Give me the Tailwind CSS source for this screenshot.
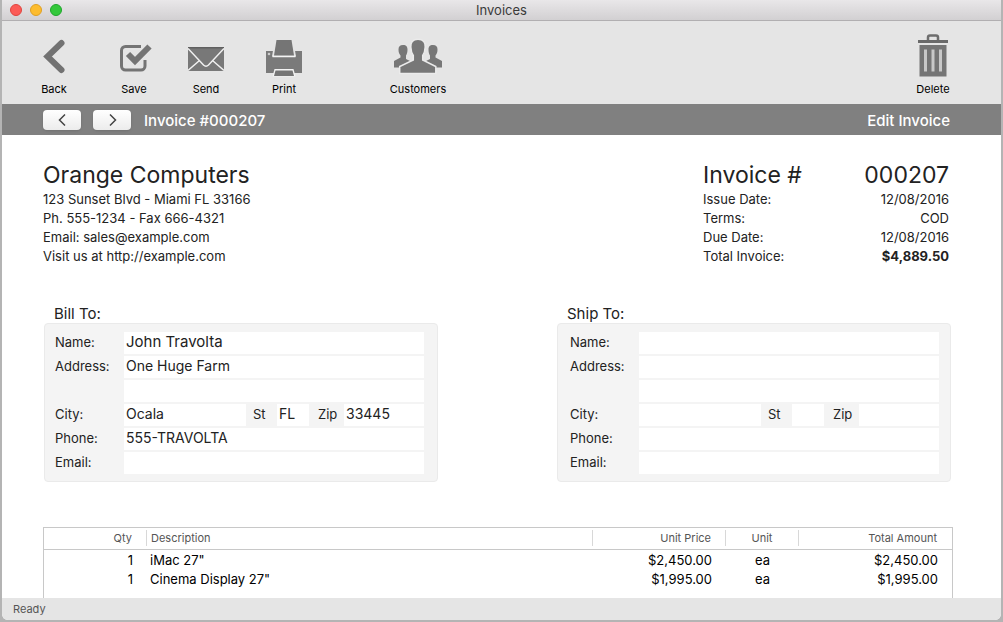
<!DOCTYPE html>
<html lang="en">
<head>
<meta charset="utf-8">
<title>Invoices</title>
<script src="https://cdn.jsdelivr.net/npm/@tailwindcss/browser@4"></script>
</head>
<body class="bg-[#b4b4b4] font-['Inter',sans-serif] text-[13px] text-[#222222]">
<div class="flex h-screen flex-col px-0.5 pb-0.5">
<div class="flex min-h-0 flex-1 flex-col overflow-hidden rounded-b-md bg-white">

  <header class="grid h-[21px] shrink-0 grid-cols-3 items-center border-b border-[#b1afb1] bg-linear-to-b from-[#e9e7e9] to-[#d2d0d2] px-2">
    <div class="flex gap-2">
      <button aria-label="Close" class="size-3 rounded-full border border-[#e0443e] bg-[#fc5b57]"></button>
      <button aria-label="Minimize" class="size-3 rounded-full border border-[#dfa023] bg-[#fdbc2e]"></button>
      <button aria-label="Zoom" class="size-3 rounded-full border border-[#1fa62c] bg-[#34c83b]"></button>
    </div>
    <h1 class="text-center text-[13px] leading-5 text-[#3a3a3a]">Invoices</h1>
  </header>

  <nav class="flex h-[83px] shrink-0 items-start bg-[#e5e5e5] pt-[13px] pr-9 pl-3 text-[11px] leading-4 text-black">
    <button class="flex w-20 flex-col items-center gap-[3px]">
      <svg class="h-11 w-6" viewBox="0 0 24 44" fill="none" stroke="#727272" stroke-width="6"><path d="M19.500 9 5.500 22.500 19.500 36" stroke-linecap="round"/></svg>
      Back
    </button>
    <button class="flex w-20 flex-col items-center gap-[3px]">
      <svg class="h-11 w-9" viewBox="0 0 36 44" fill="none" stroke="#747474"><path d="M25 12.500H9.500a4 4 0 0 0-4 4V32a4 4 0 0 0 4 4h15.500a4 4 0 0 0 4-4v-6" stroke-width="3"/><path d="M12 20.500 19 27.500 32.500 13" stroke="#e5e5e5" stroke-width="9"/><path d="M12 20 19 27 33.500 12.500" stroke-width="6"/></svg>
      Save
    </button>
    <button class="flex w-16 flex-col items-center gap-[3px]">
      <svg class="h-11 w-9" viewBox="0 0 36 44"><rect y="13" width="36" height="24" fill="#787878"/><path d="M0 13h36v1.500H0z" fill="#606060"/><path d="M0 14.500 15.500 31q2.500 2.500 5 0L36 14.500M0 36.500 11.500 26.500M36 36.500 24.500 26.500" fill="none" stroke="#f0f0f0" stroke-width="1.500"/></svg>
      Send
    </button>
    <button class="flex w-[92px] flex-col items-center gap-[3px]">
      <svg class="h-11 w-9" viewBox="0 0 36 44"><path d="M0 17h36v22H0z" fill="#7a7a7a"/><path d="M9 5h18l3 17.500H6z" fill="#e5e5e5"/><path d="M6.500 22.500h23" stroke="#f4f4f4" stroke-width="1.500"/><path d="M10.500 6h15l2.500 15.500H8z" fill="#757575"/><path d="M8.500 35h19l2 7.500h-23z" fill="#f4f4f4"/><path d="M9.500 36.500h17l1.500 5.500H8z" fill="#757575"/><circle cx="3" cy="20" r="1.300" fill="#ccc"/></svg>
      Print
    </button>
    <button class="ml-11 flex w-[88px] flex-col items-center gap-[3px]">
      <svg class="h-11 w-12" viewBox="0 0 48 44" fill="#777"><path id="person" d="M9 11c3.500 0 4.500 2 4.500 4.500 0 2.600-.4 4.400-1.500 6V25l6 3v5.500H0V27l6.500-3.500v-2c-1.300-1.500-2-3.200-2-6 0-3 1.300-4.500 4.500-4.500z"/><use href="#person" transform="matrix(-1 0 0 1 48 0)"/><path d="M24 5.300c5.400 0 7.500 3 7.200 7.700-.2 4-1 6.500-2.500 8.500v4.500l13.100 6.500V39.500H5.700v-7L19.300 26v-4.500c-1.500-2-2.300-4.500-2.500-8.500-.3-4.700 1.800-7.700 7.200-7.700z" stroke="#ebebeb" stroke-width="1.500"/></svg>
      Customers
    </button>
    <button class="ml-auto flex w-16 flex-col items-center gap-[3px]">
      <svg class="h-11 w-8" viewBox="0 0 32 44"><path d="M11 6V3.500Q11 1.500 13 1.500h6Q21 1.500 21 3.500V6" fill="none" stroke="#6e6e6e" stroke-width="2.500"/><path d="M1 6h30v3H1z" fill="#6a6a6a"/><path d="M2.500 11h27v31.500h-27z" fill="#757575"/><path d="M8.500 15.500v22M16 15.500v22M23.500 15.500v22" stroke="#c8c8c8" stroke-width="3"/></svg>
      Delete
    </button>
  </nav>

  <div class="flex h-[31px] shrink-0 items-center bg-[#808080] pr-[51px] pl-[41px] text-[15px] text-white">
    <button aria-label="Previous invoice" class="flex h-5 w-[38px] items-center justify-center rounded bg-linear-to-b from-white to-[#ececec] shadow-sm"><svg class="h-3 w-2" viewBox="0 0 8 12" fill="none" stroke="#444" stroke-width="1.500"><path d="M7 .5 1.500 6 7 11.500"/></svg></button>
    <button aria-label="Next invoice" class="ml-3 flex h-5 w-[38px] items-center justify-center rounded bg-linear-to-b from-white to-[#ececec] pl-0.5 shadow-sm"><svg class="h-3 w-2" viewBox="0 0 8 12" fill="none" stroke="#444" stroke-width="1.500"><path d="M1 .5 6.500 6 1 11.500"/></svg></button>
    <h2 class="ml-[13px] pt-[3px] font-medium">Invoice #000207</h2>
    <a href="#edit" class="ml-auto pt-[3px] font-medium">Edit Invoice</a>
  </div>

  <main class="flex min-h-0 flex-1 flex-col overflow-hidden pt-[22px] pr-12 pl-[41px]">
    <div class="flex justify-between pr-1 leading-[19px]">
      <address class="not-italic">
        <h3 class="pt-1 text-[23px] leading-[29px]">Orange Computers</h3>
        <p>123 Sunset Blvd - Miami FL 33166</p>
        <p>Ph. 555-1234 - Fax 666-4321</p>
        <p>Email: sales@example.com</p>
        <p>Visit us at http://example.com</p>
      </address>
      <dl class="grid w-[246px] grid-cols-[auto_auto] content-start justify-between">
        <dt class="pt-1 text-[23px] leading-[29px]">Invoice #</dt><dd class="pt-1 text-right text-[23px] leading-[29px]">000207</dd>
        <dt>Issue Date:</dt><dd class="text-right">12/08/2016</dd>
        <dt>Terms:</dt><dd class="text-right">COD</dd>
        <dt>Due Date:</dt><dd class="text-right">12/08/2016</dd>
        <dt>Total Invoice:</dt><dd class="text-right font-bold">$4,889.50</dd>
      </dl>
    </div>

    <form class="mt-[35px] grid shrink-0 grid-cols-2 gap-[119px] pr-0.5 pl-px">
      <fieldset class="min-w-0">
        <legend class="px-2.5 pt-1 text-[15px] leading-[18px]">Bill To:</legend>
        <div class="flex flex-col gap-0.5 rounded border border-[#eaeaea] bg-[#f4f4f4] pt-2 pr-[13px] pb-[7px] pl-2.5 text-[13px]">
          <div class="flex h-[22px] items-center"><label for="b-name" class="w-[69px]">Name:</label><input id="b-name" class="h-full min-w-0 flex-1 bg-white px-0.5 pb-1 text-[15px] outline-none" value="John Travolta"></div>
          <div class="flex h-[22px] items-center"><label for="b-addr" class="w-[69px]">Address:</label><input id="b-addr" class="h-full min-w-0 flex-1 bg-white px-0.5 pb-1 text-sm outline-none" value="One Huge Farm"></div>
          <div class="flex h-[22px] items-center pl-[69px]"><input aria-label="Address line 2" class="h-full min-w-0 flex-1 bg-white px-0.5 pb-1 text-sm outline-none"></div>
          <div class="flex h-[22px] items-center"><label for="b-city" class="w-[69px]">City:</label><input id="b-city" class="h-full min-w-0 flex-1 bg-white px-0.5 pb-1 text-sm outline-none" value="Ocala"><label for="b-st" class="w-[31px] pl-[7px]">St</label><input id="b-st" class="h-full w-8 bg-white px-0.5 pb-1 text-sm outline-none" value="FL"><label for="b-zip" class="w-[35px] pl-[9px]">Zip</label><input id="b-zip" class="h-full w-20 bg-white px-0.5 pb-1 text-sm outline-none" value="33445"></div>
          <div class="flex h-[22px] items-center"><label for="b-phone" class="w-[69px]">Phone:</label><input id="b-phone" class="h-full min-w-0 flex-1 bg-white px-0.5 pb-1 text-sm outline-none" value="555-TRAVOLTA"></div>
          <div class="flex h-[22px] items-center"><label for="b-email" class="w-[69px]">Email:</label><input id="b-email" class="h-full min-w-0 flex-1 bg-white px-0.5 pb-1 text-sm outline-none"></div>
        </div>
      </fieldset>
      <fieldset class="min-w-0">
        <legend class="px-2.5 pt-1 text-[15px] leading-[18px]">Ship To:</legend>
        <div class="flex flex-col gap-0.5 rounded border border-[#eaeaea] bg-[#f4f4f4] pt-2 pr-[11px] pb-[7px] pl-3 text-[13px]">
          <div class="flex h-[22px] items-center"><label for="s-name" class="w-[69px]">Name:</label><input id="s-name" class="h-full min-w-0 flex-1 bg-white px-0.5 pb-1 text-[15px] outline-none"></div>
          <div class="flex h-[22px] items-center"><label for="s-addr" class="w-[69px]">Address:</label><input id="s-addr" class="h-full min-w-0 flex-1 bg-white px-0.5 pb-1 text-sm outline-none"></div>
          <div class="flex h-[22px] items-center pl-[69px]"><input aria-label="Address line 2" class="h-full min-w-0 flex-1 bg-white px-0.5 pb-1 text-sm outline-none"></div>
          <div class="flex h-[22px] items-center"><label for="s-city" class="w-[69px]">City:</label><input id="s-city" class="h-full min-w-0 flex-1 bg-white px-0.5 pb-1 text-sm outline-none"><label for="s-st" class="w-[31px] pl-[7px]">St</label><input id="s-st" class="h-full w-8 bg-white px-0.5 pb-1 text-sm outline-none"><label for="s-zip" class="w-[35px] pl-[9px]">Zip</label><input id="s-zip" class="h-full w-20 bg-white px-0.5 pb-1 text-sm outline-none"></div>
          <div class="flex h-[22px] items-center"><label for="s-phone" class="w-[69px]">Phone:</label><input id="s-phone" class="h-full min-w-0 flex-1 bg-white px-0.5 pb-1 text-sm outline-none"></div>
          <div class="flex h-[22px] items-center"><label for="s-email" class="w-[69px]">Email:</label><input id="s-email" class="h-full min-w-0 flex-1 bg-white px-0.5 pb-1 text-sm outline-none"></div>
        </div>
      </fieldset>
    </form>

    <div class="mt-[45px] min-h-0 flex-1 overflow-hidden border border-b-0 border-[#c8c8c8]">
      <table class="w-full table-fixed border-collapse">
        <colgroup><col class="w-[103px]"><col><col class="w-[133px]"><col class="w-[73px]"><col class="w-[153px]"></colgroup>
        <thead class="border-b border-[#c8c8c8] text-[11px] text-[#555555]">
          <tr class="h-[21px]">
            <th class="p-0 font-normal"><div class="border-r border-[#d8d8d8] pr-3.5 text-right leading-4">Qty</div></th>
            <th class="p-0 font-normal"><div class="border-r border-[#d8d8d8] pl-1 text-left leading-4">Description</div></th>
            <th class="p-0 font-normal"><div class="border-r border-[#d8d8d8] pr-3.5 text-right leading-4">Unit Price</div></th>
            <th class="p-0 font-normal"><div class="border-r border-[#d8d8d8] text-center leading-4">Unit</div></th>
            <th class="p-0 font-normal"><div class="pr-[15px] text-right leading-4">Total Amount</div></th>
          </tr>
        </thead>
        <tbody class="leading-[19px] text-black">
          <tr><td class="pt-px pr-3.5 text-right">1</td><td class="pt-px pl-[3px]">iMac 27"</td><td class="pt-px pr-3.5 text-right">$2,450.00</td><td class="pt-px text-center">ea</td><td class="pt-px pr-3.5 text-right">$2,450.00</td></tr>
          <tr><td class="pr-3.5 text-right">1</td><td class="pl-[3px]">Cinema Display 27"</td><td class="pr-3.5 text-right">$1,995.00</td><td class="text-center">ea</td><td class="pr-3.5 text-right">$1,995.00</td></tr>
        </tbody>
      </table>
    </div>
  </main>

  <footer class="flex h-[22px] shrink-0 items-center bg-[#e5e5e5] px-[11px] text-[11px] text-[#555555]">Ready</footer>
</div>
</div>
</body>
</html>
